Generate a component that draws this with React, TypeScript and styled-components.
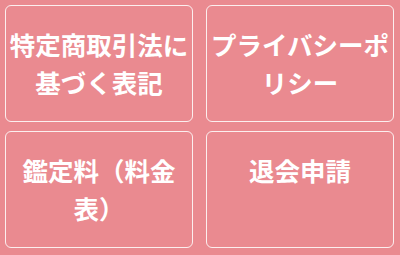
import styled, { createGlobalStyle } from "styled-components";

const GlobalStyle = createGlobalStyle`
  html, body {
    margin: 0;
    padding: 0;
    background-color: #ea8a90;
  }
`;

const Menu = styled.div`
  width: 400px;
  height: 255px;
  box-sizing: border-box;
  padding: 5px;
  display: grid;
  grid-template-columns: 188px 188px;
  grid-template-rows: 117px 117px;
  column-gap: 13px;
  row-gap: 9px;
  background-color: #ea8a90;
`;

const Card = styled.a`
  box-sizing: border-box;
  border: 1.5px solid rgba(255, 255, 255, 0.85);
  border-radius: 6px;
  padding: 19px 0 0;
  text-align: center;
  color: #fff;
  text-decoration: none;
  font-family: "Noto Sans CJK JP", "Noto Sans", sans-serif;
  font-weight: 700;
  font-size: 25.5px;
  line-height: 38px;
`;

const items = ["特定商取引法に基づく表記", "プライバシーポリシー", "鑑定料（料金表）", "退会申請"];

const App = () => {
  return (
    <>
      <GlobalStyle />
      <Menu>
        {items.map((label) => (
          <Card key={label} href="#">
            {label}
          </Card>
        ))}
      </Menu>
    </>
  );
};

export default App;
